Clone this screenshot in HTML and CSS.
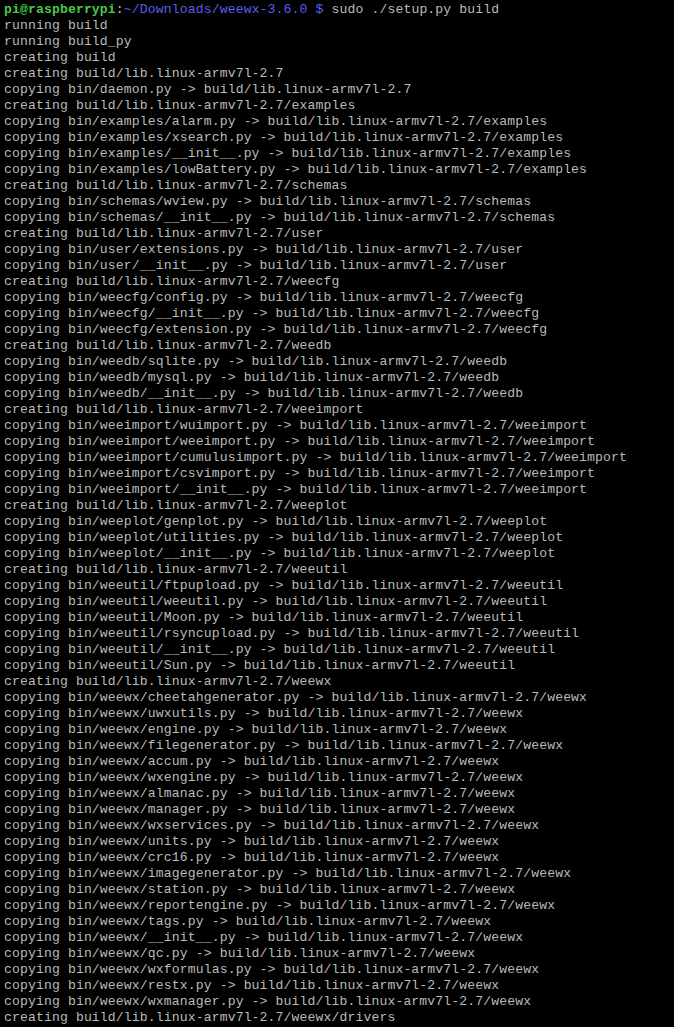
FILE: index.html
```html
<!DOCTYPE html>
<html lang="en">
<head>
  <meta charset="UTF-8">
  <title>Terminal</title>
  <link rel="stylesheet" href="styles.css">
</head>
<body>

<div class="terminal">
  <!-- Prompt line -->
  <div class="prompt"><span class="user">pi@raspberrypi</span><span class="sep">:</span><span class="path">~/Downloads/weewx-3.6.0 $</span><span class="cmd"> sudo ./setup.py build</span></div>

  <!-- Command output -->
  <pre class="output">running build
running build_py
creating build
creating build/lib.linux-armv7l-2.7
copying bin/daemon.py -&gt; build/lib.linux-armv7l-2.7
creating build/lib.linux-armv7l-2.7/examples
copying bin/examples/alarm.py -&gt; build/lib.linux-armv7l-2.7/examples
copying bin/examples/xsearch.py -&gt; build/lib.linux-armv7l-2.7/examples
copying bin/examples/__init__.py -&gt; build/lib.linux-armv7l-2.7/examples
copying bin/examples/lowBattery.py -&gt; build/lib.linux-armv7l-2.7/examples
creating build/lib.linux-armv7l-2.7/schemas
copying bin/schemas/wview.py -&gt; build/lib.linux-armv7l-2.7/schemas
copying bin/schemas/__init__.py -&gt; build/lib.linux-armv7l-2.7/schemas
creating build/lib.linux-armv7l-2.7/user
copying bin/user/extensions.py -&gt; build/lib.linux-armv7l-2.7/user
copying bin/user/__init__.py -&gt; build/lib.linux-armv7l-2.7/user
creating build/lib.linux-armv7l-2.7/weecfg
copying bin/weecfg/config.py -&gt; build/lib.linux-armv7l-2.7/weecfg
copying bin/weecfg/__init__.py -&gt; build/lib.linux-armv7l-2.7/weecfg
copying bin/weecfg/extension.py -&gt; build/lib.linux-armv7l-2.7/weecfg
creating build/lib.linux-armv7l-2.7/weedb
copying bin/weedb/sqlite.py -&gt; build/lib.linux-armv7l-2.7/weedb
copying bin/weedb/mysql.py -&gt; build/lib.linux-armv7l-2.7/weedb
copying bin/weedb/__init__.py -&gt; build/lib.linux-armv7l-2.7/weedb
creating build/lib.linux-armv7l-2.7/weeimport
copying bin/weeimport/wuimport.py -&gt; build/lib.linux-armv7l-2.7/weeimport
copying bin/weeimport/weeimport.py -&gt; build/lib.linux-armv7l-2.7/weeimport
copying bin/weeimport/cumulusimport.py -&gt; build/lib.linux-armv7l-2.7/weeimport
copying bin/weeimport/csvimport.py -&gt; build/lib.linux-armv7l-2.7/weeimport
copying bin/weeimport/__init__.py -&gt; build/lib.linux-armv7l-2.7/weeimport
creating build/lib.linux-armv7l-2.7/weeplot
copying bin/weeplot/genplot.py -&gt; build/lib.linux-armv7l-2.7/weeplot
copying bin/weeplot/utilities.py -&gt; build/lib.linux-armv7l-2.7/weeplot
copying bin/weeplot/__init__.py -&gt; build/lib.linux-armv7l-2.7/weeplot
creating build/lib.linux-armv7l-2.7/weeutil
copying bin/weeutil/ftpupload.py -&gt; build/lib.linux-armv7l-2.7/weeutil
copying bin/weeutil/weeutil.py -&gt; build/lib.linux-armv7l-2.7/weeutil
copying bin/weeutil/Moon.py -&gt; build/lib.linux-armv7l-2.7/weeutil
copying bin/weeutil/rsyncupload.py -&gt; build/lib.linux-armv7l-2.7/weeutil
copying bin/weeutil/__init__.py -&gt; build/lib.linux-armv7l-2.7/weeutil
copying bin/weeutil/Sun.py -&gt; build/lib.linux-armv7l-2.7/weeutil
creating build/lib.linux-armv7l-2.7/weewx
copying bin/weewx/cheetahgenerator.py -&gt; build/lib.linux-armv7l-2.7/weewx
copying bin/weewx/uwxutils.py -&gt; build/lib.linux-armv7l-2.7/weewx
copying bin/weewx/engine.py -&gt; build/lib.linux-armv7l-2.7/weewx
copying bin/weewx/filegenerator.py -&gt; build/lib.linux-armv7l-2.7/weewx
copying bin/weewx/accum.py -&gt; build/lib.linux-armv7l-2.7/weewx
copying bin/weewx/wxengine.py -&gt; build/lib.linux-armv7l-2.7/weewx
copying bin/weewx/almanac.py -&gt; build/lib.linux-armv7l-2.7/weewx
copying bin/weewx/manager.py -&gt; build/lib.linux-armv7l-2.7/weewx
copying bin/weewx/wxservices.py -&gt; build/lib.linux-armv7l-2.7/weewx
copying bin/weewx/units.py -&gt; build/lib.linux-armv7l-2.7/weewx
copying bin/weewx/crc16.py -&gt; build/lib.linux-armv7l-2.7/weewx
copying bin/weewx/imagegenerator.py -&gt; build/lib.linux-armv7l-2.7/weewx
copying bin/weewx/station.py -&gt; build/lib.linux-armv7l-2.7/weewx
copying bin/weewx/reportengine.py -&gt; build/lib.linux-armv7l-2.7/weewx
copying bin/weewx/tags.py -&gt; build/lib.linux-armv7l-2.7/weewx
copying bin/weewx/__init__.py -&gt; build/lib.linux-armv7l-2.7/weewx
copying bin/weewx/qc.py -&gt; build/lib.linux-armv7l-2.7/weewx
copying bin/weewx/wxformulas.py -&gt; build/lib.linux-armv7l-2.7/weewx
copying bin/weewx/restx.py -&gt; build/lib.linux-armv7l-2.7/weewx
copying bin/weewx/wxmanager.py -&gt; build/lib.linux-armv7l-2.7/weewx
creating build/lib.linux-armv7l-2.7/weewx/drivers</pre>
</div>

</body>
</html>
```

FILE: styles.css
```css
:root {
  --terminal-bg: #000000;
  --terminal-text: #bbbbbb;
  --prompt-user: #48c848;
  --prompt-path: #5c5cf0;
}

html, body {
  margin: 0;
  background-color: var(--terminal-bg);
}

body {
  width: 674px;
  height: 1027px;
  overflow: hidden;
}

.terminal {
  padding: 2px 0 0 4px;
  font-family: "Liberation Mono", "Courier New", monospace;
  font-size: 13.1px;
  letter-spacing: 0.13px;
  line-height: 16px;
  color: var(--terminal-text);
}

.prompt {
  white-space: pre;
}

.output {
  margin: 0;
  font: inherit;
  white-space: pre;
}

.user {
  color: var(--prompt-user);
  font-weight: bold;
}

.path {
  color: var(--prompt-path);
}
```
